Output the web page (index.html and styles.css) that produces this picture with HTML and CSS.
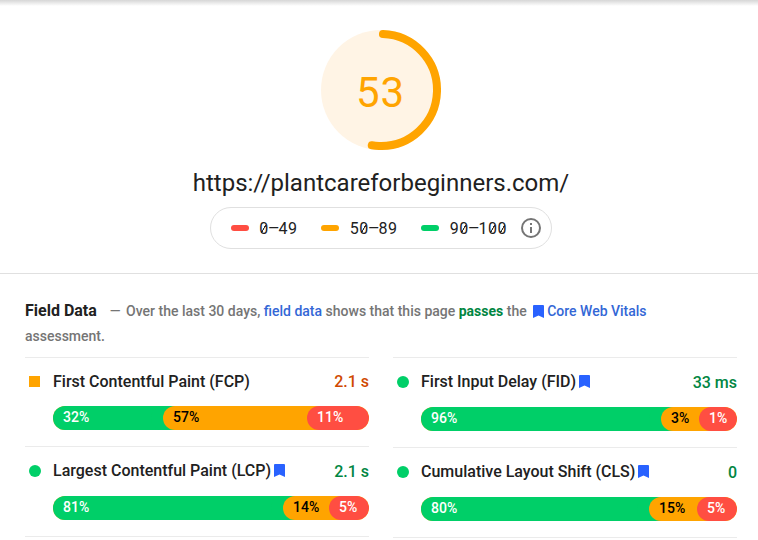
FILE: index.html
```html
<!DOCTYPE html>
<html lang="en">
<head>
<meta charset="utf-8">
<title>PageSpeed Insights</title>
<link rel="stylesheet" href="styles.css">
</head>
<body>
<div class="topshade"></div>
<header class="summary">
  <div class="gauge">
    <svg class="gauge-svg" width="120" height="120" viewBox="0 0 120 120">
      <circle cx="60" cy="60" r="60" fill="#fff4e5"/>
      <circle cx="60" cy="60" r="56" fill="none" stroke="#ffa400" stroke-width="8" stroke-linecap="round" stroke-dasharray="183 400" transform="rotate(-88 60 60)"/>
    </svg>
    <span class="score">53</span>
  </div>
  <div class="url">https://plantcareforbeginners.com/</div>
  <div class="scale">
    <span class="range"><i class="dash poor"></i><span class="mono"><b class="zero">0</b><b class="en">–</b><b>4</b><b>9</b></span></span>
    <span class="range"><i class="dash mid"></i><span class="mono"><b>5</b><b class="zero">0</b><b class="en">–</b><b>8</b><b>9</b></span></span>
    <span class="range"><i class="dash good"></i><span class="mono"><b>9</b><b class="zero">0</b><b class="en">–</b><b>1</b><b class="zero">0</b><b class="zero">0</b></span></span>
    <svg class="info" width="20" height="20" viewBox="0 0 20 20"><circle cx="10" cy="10" r="9" fill="none" stroke="#757575" stroke-width="2"/><path d="M9 5h2v2H9zM9 9h2v6H9z" fill="#757575"/></svg>
  </div>
</header>
<main class="field">
  <p class="intro"><span class="title">Field Data</span><span class="lead">—&nbsp;<span class="gap"></span>Over the last 30 days, <a>field data</a> shows that this page <strong>passes</strong> the <svg class="mark mark-inline" width="11" height="13" viewBox="0 0 11 13"><path d="M1 0h9q1 0 1 1v12L5.5 10.5 0 13V1q0-1 1-1z"/></svg><a>Core Web Vitals</a> assessment.</span></p>
  <div class="columns">
    <div class="column">
      <section class="metric short">
        <div class="head"><i class="square"></i><span class="name">First Contentful Paint (FCP)</span><span class="value average">2.1 s</span></div>
        <div class="bar"><span class="seg good" style="width:110px">32%</span><span class="seg mid" style="width:144px">57%</span><span class="seg poor" style="width:62px">11%</span></div>
      </section>
      <section class="metric">
        <div class="head"><i class="dot"></i><span class="name">Largest Contentful Paint (LCP)</span><svg class="mark" width="11" height="13" viewBox="0 0 11 13"><path d="M1 0h9q1 0 1 1v12L5.5 10.5 0 13V1q0-1 1-1z"/></svg><span class="value low">2.1 s</span></div>
        <div class="bar lower"><span class="seg good" style="width:230px">81%</span><span class="seg mid" style="width:46px">14%</span><span class="seg poor" style="width:40px">5%</span></div>
      </section>
      <div class="rule"></div>
    </div>
    <div class="column">
      <section class="metric">
        <div class="head"><i class="dot"></i><span class="name">First Input Delay (FID)</span><svg class="mark" width="11" height="13" viewBox="0 0 11 13"><path d="M1 0h9q1 0 1 1v12L5.5 10.5 0 13V1q0-1 1-1z"/></svg><span class="value low">33 ms</span></div>
        <div class="bar lower"><span class="seg good" style="width:240px">96%</span><span class="seg mid" style="width:38px">3%</span><span class="seg poor" style="width:38px">1%</span></div>
      </section>
      <section class="metric">
        <div class="head"><i class="dot"></i><span class="name">Cumulative Layout Shift (CLS)</span><svg class="mark" width="11" height="13" viewBox="0 0 11 13"><path d="M1 0h9q1 0 1 1v12L5.5 10.5 0 13V1q0-1 1-1z"/></svg><span class="value low">0</span></div>
        <div class="bar lower"><span class="seg good" style="width:228px">80%</span><span class="seg mid" style="width:48px">15%</span><span class="seg poor" style="width:40px">5%</span></div>
      </section>
      <div class="rule"></div>
    </div>
  </div>
</main>
</body>
</html>
```
FILE: styles.css
```css
* { box-sizing: border-box; }
body { margin: 0; height: 540px; overflow: hidden; background: #fff; color: #212121; font-family: Roboto, sans-serif; }
.topshade { height: 6px; background: linear-gradient(#d6d6d6, #fff); }
.summary { height: 268px; padding: 24px 0 0 4px; border-bottom: 1px solid #e0e0e0; display: flex; flex-direction: column; align-items: center; }
.gauge { display: grid; place-items: center; width: 120px; height: 120px; }
.gauge-svg, .score { grid-area: 1 / 1; }
.score { color: #ffa400; font-size: 42px; line-height: 48px; letter-spacing: .8px; padding-top: 5px; padding-right: 1px; }
.url { margin-top: 17px; height: 32px; font-size: 24px; line-height: 32px; white-space: nowrap; }
.scale { margin-top: 8px; width: 342px; height: 42px; border: 1px solid #e0e0e0; border-radius: 21px; display: flex; align-items: center; padding-left: 20px; }
.range { display: flex; align-items: center; margin-right: 24px; }
.range:nth-child(3) { margin-right: 14px; }
.dash { width: 18px; height: 6px; border-radius: 3px; margin-right: 10px; }
.poor { background: #ff4e42; }
.mid { background: #ffa400; }
.good { background: #00cf68; }
.mono { display: flex; font-size: 16px; line-height: 20px; padding-top: 2px; }
.mono b { display: flex; justify-content: center; width: 9.6px; font-weight: 400; }
.mono .en { transform: scaleX(1.15); }
.zero { background: linear-gradient(120deg, transparent 42%, #333 44%, #333 56%, transparent 58%) center / 5px 8px no-repeat; }
.field { padding: 24px 21px 0 25px; }
.intro { margin: 0; height: 59px; padding-right: 50px; line-height: 25px; font-size: 14px; font-weight: 500; color: #757575; }
.title { font-size: 16px; color: #212121; font-weight: 700; margin-right: 13px; }
.gap { margin-left: 2px; }
.intro a { color: #3367d6; }
.intro strong { color: #018642; font-weight: 700; }
.mark { fill: #2962ff; flex: none; margin: 0 0 2px 3px; }
.mark-inline { vertical-align: -2px; margin: 0 3px; }
.columns { display: grid; grid-template-columns: 344px 344px; gap: 24px; }
.metric { height: 90px; border-top: 1px solid #ebebeb; }
.metric.short { height: 89px; }
.rule { height: 1px; background: #ebebeb; }
.head { display: flex; align-items: center; height: 48px; font-size: 16px; font-weight: 500; }
.name { padding-bottom: 2px; }
.dot { width: 12px; height: 12px; border-radius: 50%; background: #00cf68; margin: 0 12px 0 4px; }
.square { width: 11px; height: 11px; background: #ffa400; margin: 0 13px 1px 4px; }
.value { margin-left: auto; }
.average { color: #d04900; padding-bottom: 2px; }
.low { color: #018642; }
.bar { display: flex; height: 24px; margin-left: 28px; border-radius: 12px; overflow: hidden; background: #ffa400; }
.lower { margin-top: 1px; }
.seg { padding-left: 10px; font-size: 14px; line-height: 22px; font-weight: 500; color: #fff; }
.seg.mid { color: #000; border-radius: 12px 0 0 12px; box-shadow: -12px 0 0 #00cf68; }
.seg.poor { border-radius: 12px; }
```
